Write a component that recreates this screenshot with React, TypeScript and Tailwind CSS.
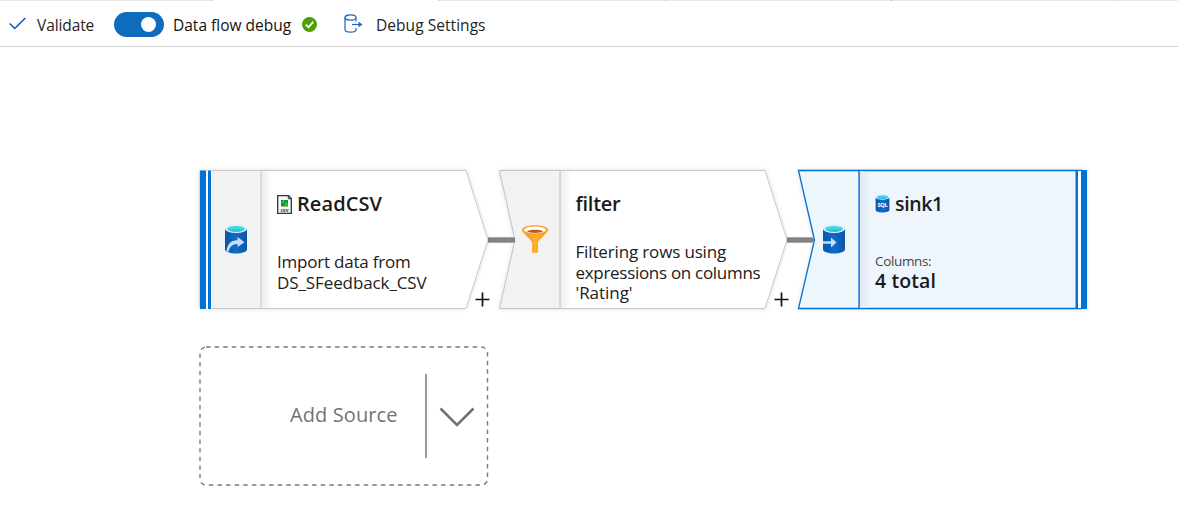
import React from "react";

function Cylinder({ id, children, className }: { id: string; children?: React.ReactNode; className: string }) {
  return (
    <svg className={className} viewBox="0 0 24 30">
      <defs>
        <linearGradient id={id} x1="0" y1="0" x2="1" y2="0">
          <stop offset="0" stopColor="#0a57a8" />
          <stop offset="0.5" stopColor="#0f6bca" />
          <stop offset="1" stopColor="#0b55a4" />
        </linearGradient>
      </defs>
      <path d="M1 4.5V25.5C1 27.8 6 29.5 12 29.5S23 27.8 23 25.5V4.5Z" fill={`url(#${id})`} />
      <ellipse cx="12" cy="4.8" rx="11.2" ry="4.2" fill="#e9eef2" />
      <ellipse cx="12" cy="4.9" rx="9" ry="3" fill="#41d6ee" />
      <path d="M4.500 6.300C8 5 16 5 19.500 6.300C16 8.200 8 8.200 4.500 6.300Z" fill="#25c2dc" />
      {children}
    </svg>
  );
}

function FunnelIcon() {
  return (
    <svg className="h-7 w-[26px]" viewBox="0 0 26 28">
      <defs>
        <linearGradient id="funnel" x1="0" y1="0" x2="1" y2="0">
          <stop offset="0" stopColor="#f78d1e" />
          <stop offset="0.5" stopColor="#ffaf2e" />
          <stop offset="1" stopColor="#f7941d" />
        </linearGradient>
      </defs>
      <path d="M0 4.500C0 8.500 10 14.500 10 18V26.500Q10 28 11.500 28H14.500Q16 28 16 26.500V18C16 14.500 26 8.500 26 4.500Z" fill="url(#funnel)" />
      <ellipse cx="13" cy="5" rx="13" ry="4.800" fill="#f9a02b" />
      <ellipse cx="13" cy="4.900" rx="11" ry="3.500" fill="#fff" />
      <path d="M5 6.500C6.500 4.200 19.500 4.200 21 6.500C18 8.400 8 8.400 5 6.500Z" fill="#bd5d12" />
    </svg>
  );
}

function CsvIcon() {
  return (
    <svg className="h-[19px] w-[15px] shrink-0" viewBox="0 0 15 19">
      <path d="M.7.700H11.500L14.300 3.500V18.300H.700Z" fill="#f4faf8" stroke="#233a42" strokeWidth="1.300" />
      <path d="M11.300.700V3.700H14.300" fill="none" stroke="#233a42" />
      <path d="M4 5H11V11.500H4Z" fill="#14962f" />
      <path d="M4 7.200H7M8 9.200H11M6.500 5V7M9 7V11" stroke="#6fd47e" strokeWidth=".7" />
      <text x="7.500" y="16.700" textAnchor="middle" fontSize="5" fontWeight="700" fill="#233a42">csv</text>
    </svg>
  );
}

function Plus({ className }: { className: string }) {
  return (
    <svg className={className} viewBox="0 0 15 15">
      <path d="M7.500.500V14.500M.500 7.500H14.500" stroke="#111" strokeWidth="1.700" />
    </svg>
  );
}

function Toolbar() {
  return (
    <header className="h-[47px] border-b border-[#cfcfcf]">
      <div className="flex h-px">
        <div className="w-[213px] border-r border-[#c8c8c8] bg-[#e8e8e8]" />
        <div className="w-[226px] border-r border-[#c8c8c8] bg-white" />
        <div className="w-[226px] border-r border-[#c8c8c8] bg-[#e8e8e8]" />
        <div className="w-[227px] border-r-2 border-[#c8c8c8] bg-[#e8e8e8]" />
        <div className="w-[226px] border-r border-[#c8c8c8] bg-[#e8e8e8]" />
        <div className="flex-1 bg-[#e8e8e8]" />
      </div>
      <div className="flex h-[45px] items-center pt-[3px] text-[15.5px] leading-5 text-[#242424]">
        <svg className="-mt-[4px] ml-[9px] h-[13px] w-[17px]" viewBox="0 0 17 13">
          <path d="M.700 6.500L5.700 11.500L16.300 1" fill="none" stroke="#1548c8" strokeWidth="1.400" />
        </svg>
        <span className="ml-[11px] w-[77px] whitespace-nowrap tracking-[-0.1px]">Validate</span>
        <span className="-mt-[2px] flex h-[25px] w-[50px] items-center justify-end rounded-full bg-[#0f6cbd] pr-[8px]">
          <span className="size-[15px] rounded-full bg-white" />
        </span>
        <span className="ml-[9px] w-[129px] whitespace-nowrap tracking-[0px] text-[#111]">Data flow debug</span>
        <svg className="-mt-[2px] size-[15px]" viewBox="0 0 15 15">
          <circle cx="7.500" cy="7.500" r="7.500" fill="#4ba100" />
          <path d="M3.700 7.600L6.500 10.200L11.300 4.800" fill="none" stroke="#fff" strokeWidth="1.800" />
        </svg>
        <svg className="-mt-[3px] ml-[27px] h-[19px] w-[20px]" viewBox="0 0 20 19" fill="none" stroke="#1768bd" strokeWidth="1.200">
          <ellipse cx="6.500" cy="3.500" rx="5.500" ry="2.700" />
          <path d="M1 3.500V15.500C1 17 3.500 18.200 6.500 18.200S12 17 12 15.500V14M12 3.500V7.500" />
          <path d="M8 10.500H17" />
          <path d="M14.500 7.800L18.500 10.500L14.500 13.200Z" fill="#1768bd" stroke="none" />
        </svg>
        <span className="ml-[12px] whitespace-nowrap tracking-[0.050px]">Debug Settings</span>
      </div>
    </header>
  );
}

function BodyShade({ id, tint }: { id: string; tint: string }) {
  return (
    <>
      <defs>
        <linearGradient id={id} x1="0" y1="0" x2="1" y2="0">
          <stop offset="0" stopColor={tint} />
          <stop offset="1" stopColor={tint} stopOpacity="0" />
        </linearGradient>
      </defs>
      <path d="M61.500 1H72V138H61.500Z" fill={`url(#${id})`} />
    </>
  );
}

function SourceNode() {
  return (
    <section className="absolute left-[200px] top-[123px] h-[140px] w-[289px]">
      <svg className="absolute inset-0 h-full w-full overflow-visible drop-shadow-[0_0_2px_rgba(0,0,0,0.13)]" viewBox="0 0 289 140">
        <path d="M61 .500H266L288 70L266 138.500H61Z" fill="#fff" stroke="#c8c8c8" />
        <BodyShade id="source-shade" tint="#ececec" />
        <path d="M0 .500H61V138.500H0Z" fill="#f2f2f2" stroke="#c8c8c8" />
        <path d="M0 .500H12V139H0Z" fill="#fff" />
        <path d="M0 .500H6V139H0ZM8 .500H11V139H8Z" fill="#0073d8" />
      </svg>
      <div className="relative flex h-full">
        <div className="flex w-[61px] justify-end pr-[13px] pt-[54px]">
          <Cylinder id="source-drum" className="h-[30px] w-[24px]">
            <path d="M2.500 27.500C3 19.500 8 15.800 13.500 16.200V13L20.500 18.200L13.500 23V20C9 20 5.500 22.500 4.500 28Z" fill="#c9def3" />
          </Cylinder>
        </div>
        <div className="flex-1 pl-4 pt-5">
          <h2 className="flex h-7 items-center gap-[5px] text-[20px] font-semibold tracking-[0.100px] text-[#1b1b1b]"><CsvIcon />ReadCSV</h2>
          <p className="mt-[33px] whitespace-nowrap text-[17px] leading-[21px] tracking-[-0.220px] text-[#202020]">Import data from<br /><span className="tracking-[-0.100px]">DS_SFeedback_CSV</span></p>
        </div>
      </div>
    </section>
  );
}

function FilterNode() {
  return (
    <section className="absolute left-[499px] top-[123px] h-[140px] w-[289px]">
      <svg className="absolute inset-0 h-full w-full overflow-visible drop-shadow-[0_0_2px_rgba(0,0,0,0.13)]" viewBox="0 0 289 140">
        <path d="M61 .500H266L288 70L266 138.500H61Z" fill="#fff" stroke="#c8c8c8" />
        <BodyShade id="filter-shade" tint="#ececec" />
        <path d="M.500 .500H61V138.500H.500L16 70Z" fill="#f2f2f2" stroke="#c3c3c3" />
      </svg>
      <div className="relative flex h-full">
        <div className="flex w-[61px] justify-end pr-[12px] pt-[55px]"><FunnelIcon /></div>
        <div className="flex-1 pl-[15.500px] pt-5">
          <h2 className="flex h-7 items-center text-[20px] font-semibold tracking-[-0.250px] text-[#1b1b1b]">filter</h2>
          <p className="mt-6 whitespace-nowrap text-[17px] leading-[20.500px] tracking-[-0.300px] text-[#202020]"><span className="tracking-[-0.150px]">Filtering rows using</span><br />expressions on columns<br /><span className="tracking-[-0.050px]">'Rating'</span></p>
        </div>
      </div>
    </section>
  );
}

function SinkNode() {
  return (
    <section className="absolute left-[798px] top-[123px] h-[140px] w-[289px]">
      <svg className="absolute inset-0 h-full w-full overflow-visible drop-shadow-[0_0_2px_rgba(0,0,0,0.13)]" viewBox="0 0 289 140">
        <path d="M61 .500H283V138.500H61Z" fill="#eef5fc" stroke="#0073d8" strokeWidth="1.300" />
        <BodyShade id="sink-shade" tint="#e2e7ed" />
        <path d="M.500 .500H61V138.500H.500L16.500 70Z" fill="#eef6fd" stroke="#0070d4" strokeWidth="1.300" />
        <path d="M280 1H284V138H280Z" fill="#fff" />
        <path d="M277.500 0H280V139H277.500ZM283 0H289V139H283Z" fill="#0073d8" />
      </svg>
      <div className="relative flex h-full">
        <div className="flex w-[61px] justify-end pr-[13px] pt-[54px]">
          <Cylinder id="sink-drum" className="h-[30px] w-[24px]">
            <path d="M1 17.200H9V13.500L14.500 18.500L9 23.500V19.800H1Z" fill="#c9def3" />
          </Cylinder>
        </div>
        <div className="flex-1 pl-4 pt-5">
          <h2 className="flex h-7 items-center gap-[5px] text-[19.5px] font-semibold tracking-[-0.350px] text-[#1b1b1b]">
            <Cylinder id="sql-drum" className="-mt-[2px] h-[19px] w-[15px] shrink-0">
              <text x="12" y="20" textAnchor="middle" fontSize="9" fontWeight="700" fill="#fff">SQL</text>
            </Cylinder>
            sink1
          </h2>
          <p className="mt-[33px] text-[13.500px] leading-[20px] tracking-[-0.350px] text-[#444]">Columns:</p>
          <p className="-mt-[1px] text-[19.500px] font-semibold leading-[21px] tracking-[0.100px] text-[#1b1b1b]">4 total</p>
        </div>
      </div>
    </section>
  );
}

function AddSource() {
  return (
    <button className="absolute left-[199px] top-[299px] flex h-[141px] w-[290px] items-center">
      <svg className="absolute inset-0 h-full w-full" viewBox="0 0 290 141">
        <rect x="1" y="1" width="287.500" height="138" rx="6" fill="none" stroke="#7c7c7c" strokeWidth="1.400" strokeDasharray="4.500 4.100" />
      </svg>
      <span className="-mt-[3px] ml-[91px] w-[135px] whitespace-nowrap text-left text-[20px] tracking-[0.100px] text-[#737373]">Add Source</span>
      <span className="-mt-[1px] h-[84px] w-[2px] bg-[#9a9a9a]" />
      <svg className="ml-[12px] mt-[2px] h-[21px] w-[36px]" viewBox="0 0 36 21">
        <path d="M1.500 1.500L18 18L34.500 1.500" fill="none" stroke="#707070" strokeWidth="2.500" />
      </svg>
    </button>
  );
}

export default function App() {
  return (
    <div className="h-[532px] w-full overflow-hidden bg-white font-['Open_Sans','Noto_Sans',sans-serif]">
      <Toolbar />
      <main className="relative h-[485px]">
        <SourceNode />
        <FilterNode />
        <SinkNode />
        <div className="absolute left-[488px] top-[190px] h-[6px] w-[27px] border-y border-[#aaa7a4] bg-[#84817e]" />
        <div className="absolute left-[787px] top-[190px] h-[6px] w-[27px] border-y border-[#aaa7a4] bg-[#84817e]" />
        <Plus className="absolute left-[475px] top-[245px] size-[15px]" />
        <Plus className="absolute left-[774px] top-[245px] size-[15px]" />
        <AddSource />
      </main>
    </div>
  );
}
